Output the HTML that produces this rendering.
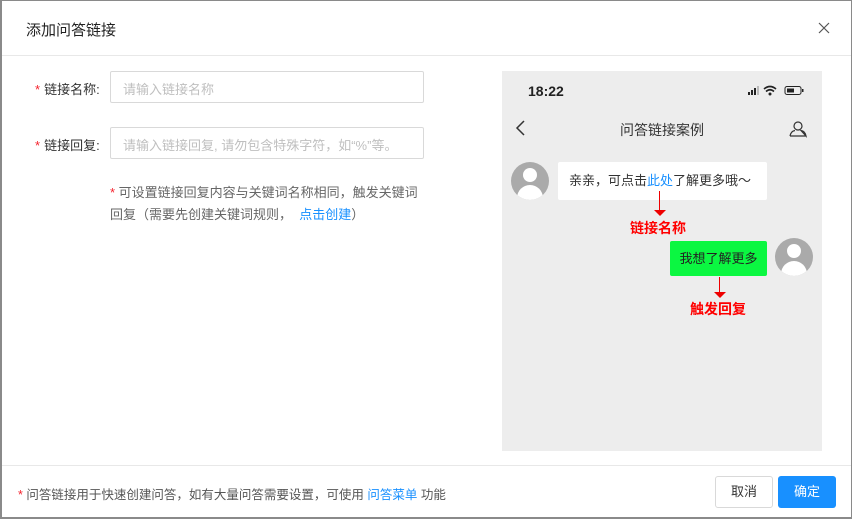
<!DOCTYPE html>
<html><head><meta charset="utf-8"><style>
*{margin:0;padding:0;box-sizing:border-box}
body{width:852px;height:519px;background:#8a8a8a;font-family:"Liberation Sans","Noto Sans CJK SC",sans-serif;position:relative;overflow:hidden;color:#333}
.dlg{position:absolute;left:2px;top:1px;width:849px;height:516px;background:#fff}
.title{position:absolute;left:24px;top:18px;font-size:15px;color:#222}
.close{position:absolute;left:816px;top:21px}
.hr{position:absolute;left:0;right:0;height:1px;background:#e8e8e8}
.lbl{position:absolute;font-size:13px;color:#333}
.lbl b{color:#f5222d;font-weight:normal;margin-right:4px}
.inp{position:absolute;left:108px;width:314px;height:32px;border:1px solid #d9d9d9;border-radius:2px;font-size:13px;color:#bfbfbf;padding:7px 12px;white-space:nowrap}
.note{position:absolute;left:108px;top:181px;width:320px;font-size:13px;line-height:22px;color:#666}
.note b{color:#f5222d;font-weight:normal}
.blue{color:#1890ff}
.phone{position:absolute;left:500px;top:70px;width:320px;height:380px;background:#ededed}
.av{position:absolute;width:38px;height:38px;border-radius:50%;background:#aaa;overflow:hidden}
.av:before{content:"";position:absolute;left:12px;top:6px;width:14px;height:14px;border-radius:50%;background:#fff}
.av:after{content:"";position:absolute;left:6px;top:23px;width:26px;height:20px;border-radius:13px 13px 0 0;background:#fff}
.red{position:absolute;color:#f00;font-size:14px;font-weight:bold}
.btn{position:absolute;top:475px;height:32px;font-size:13px;border-radius:3px;text-align:center;line-height:30px}
</style></head><body>
<div class="dlg">
<div class="title">添加问答链接</div>
<svg class="close" width="12" height="12" viewBox="0 0 12 12"><path d="M1 1L11 11M11 1L1 11" stroke="#555" stroke-width="1.2"/></svg>
<div class="hr" style="top:54px"></div>
<div class="lbl" style="left:33px;top:78px"><b>*</b>链接名称:</div>
<div class="inp" style="top:70px">请输入链接名称</div>
<div class="lbl" style="left:33px;top:134px"><b>*</b>链接回复:</div>
<div class="inp" style="top:126px">请输入链接回复, 请勿包含特殊字符，如“%”等。</div>
<div class="note"><b>*</b> 可设置链接回复内容与关键词名称相同，触发关键词回复（需要先创建关键词规则，&nbsp;&nbsp;<span class="blue">点击创建</span>）</div>
<div class="phone">
 <div style="position:absolute;left:26px;top:12px;font-size:14px;font-weight:bold;color:#222">18:22</div>
 <svg style="position:absolute;left:246px;top:14px" width="62" height="12" viewBox="0 0 62 12">
  <rect x="0" y="7" width="2" height="3" fill="#222"/><rect x="3" y="5" width="2" height="5" fill="#222"/><rect x="6" y="3" width="2" height="7" fill="#222"/><rect x="9" y="1" width="2" height="9" fill="#bbb"/>
  <path d="M16 4Q22 -1 28 4M18 6.5Q22 3 26 6.5" stroke="#222" stroke-width="1.6" fill="none"/><circle cx="22" cy="9" r="1.5" fill="#222"/>
  <rect x="37" y="1.5" width="16" height="8" rx="2" fill="none" stroke="#222"/><rect x="39" y="3.5" width="7" height="4" fill="#222"/><rect x="54" y="4" width="1.5" height="3" fill="#222"/>
 </svg>
 <svg style="position:absolute;left:13px;top:49px" width="12" height="16"><path d="M9 1L2 8L9 15" stroke="#333" stroke-width="1.5" fill="none"/></svg>
 <div style="position:absolute;left:0;right:0;top:49px;text-align:center;font-size:14px;color:#333">问答链接案例</div>
 <svg style="position:absolute;left:287px;top:49px" width="18" height="18" viewBox="0 0 18 18"><circle cx="9" cy="6" r="4" stroke="#333" fill="none" stroke-width="1.2"/><path d="M1 16Q2 11 6 10.5M12 10.5Q16 11 17 16Z M1 16H17" stroke="#333" fill="none" stroke-width="1.2"/></svg>
 <div class="av" style="left:9px;top:91px"></div>
 <div style="position:absolute;left:56px;top:91px;width:209px;height:38px;background:#fff;border-radius:2px;font-size:13px;line-height:38px;padding-left:11px;color:#333;white-space:nowrap">亲亲，可点击<span class="blue">此处</span>了解更多哦～</div>
 <div style="position:absolute;left:157px;top:120px;width:1px;height:20px;background:#e00"></div>
 <div style="position:absolute;left:152px;top:139px;border:6px solid transparent;border-top:6px solid #e00"></div>
 <div class="red" style="left:128px;top:147px">链接名称</div>
 <div style="position:absolute;left:168px;top:170px;width:97px;height:35px;background:#0bf741;border-radius:2px;font-size:13px;line-height:35px;text-align:center;color:#222">我想了解更多</div>
 <div class="av" style="left:273px;top:167px"></div>
 <div style="position:absolute;left:217px;top:206px;width:1px;height:16px;background:#e00"></div>
 <div style="position:absolute;left:212px;top:221px;border:6px solid transparent;border-top:6px solid #e00"></div>
 <div class="red" style="left:188px;top:228px">触发回复</div>
</div>
<div class="hr" style="top:464px"></div>
<div style="position:absolute;left:16px;top:483px;font-size:12.5px;color:#555"><span style="color:#f5222d">*</span> 问答链接用于快速创建问答，如有大量问答需要设置，可使用 <span class="blue">问答菜单</span> 功能</div>
<div class="btn" style="left:713px;width:58px;border:1px solid #d9d9d9;color:#333">取消</div>
<div class="btn" style="left:776px;width:58px;background:#1890ff;color:#fff;line-height:32px">确定</div>
</div>
</body></html>
